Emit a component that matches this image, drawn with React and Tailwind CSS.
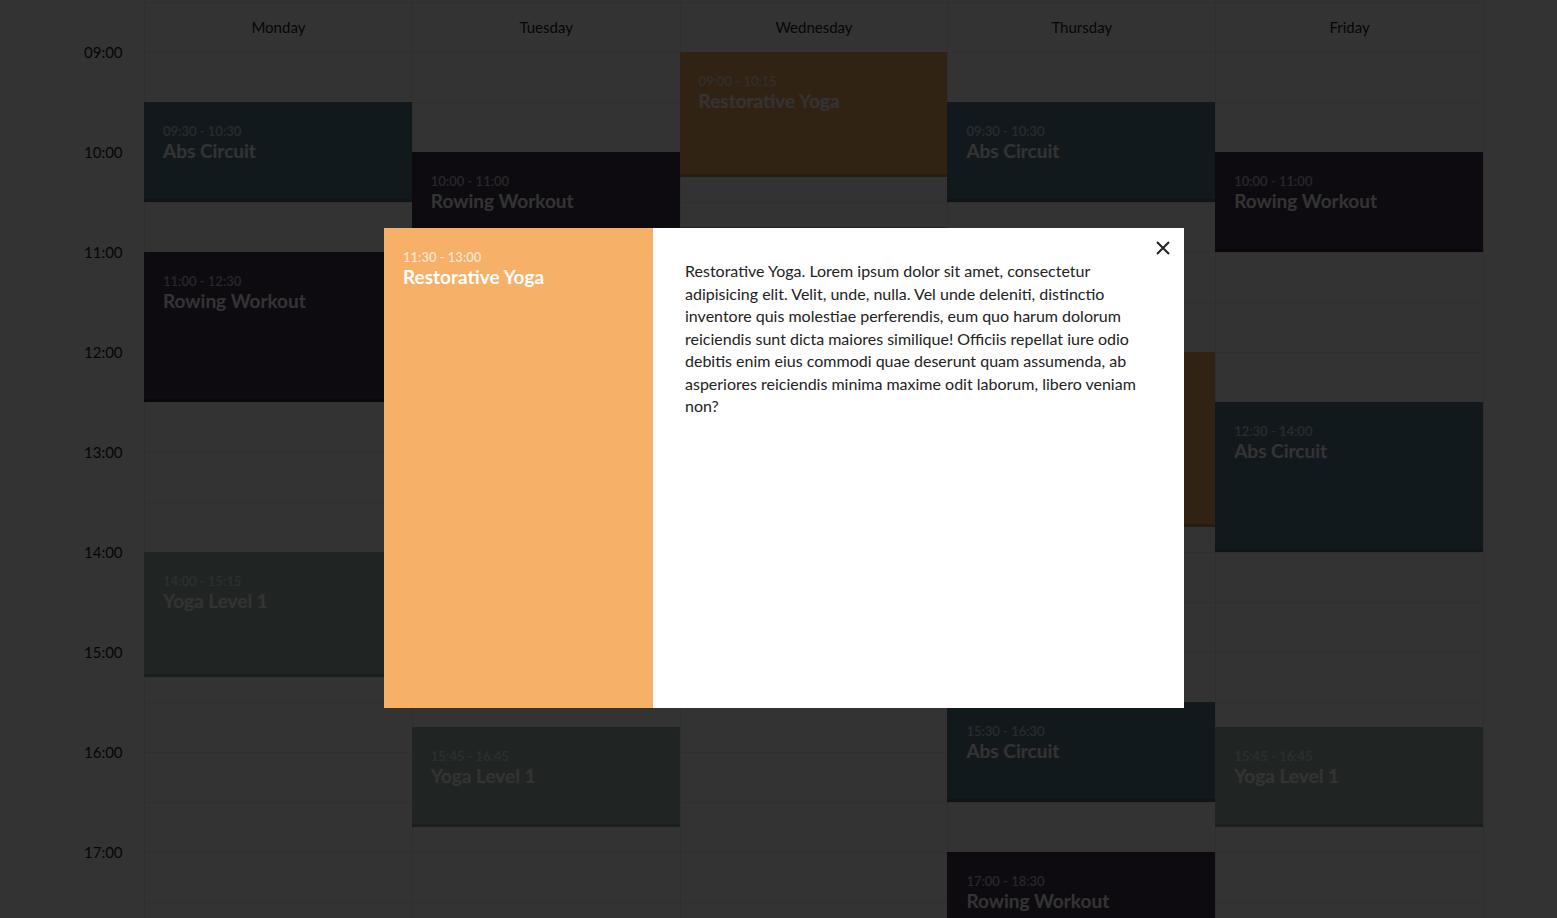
import React from 'react';

const COLORS = {
    abs: 'bg-[#577f92]',
    rowing: 'bg-[#443453]',
    yoga: 'bg-[#f6b067]',
    level: 'bg-[#a2b9b2]',
};

const days = [
    {
        name: 'Monday',
        events: [
            { start: '09:30', end: '10:30', name: 'Abs Circuit', type: 'abs' },
            { start: '11:00', end: '12:30', name: 'Rowing Workout', type: 'rowing' },
            { start: '14:00', end: '15:15', name: 'Yoga Level 1', type: 'level' },
        ],
    },
    {
        name: 'Tuesday',
        events: [
            { start: '10:00', end: '11:00', name: 'Rowing Workout', type: 'rowing' },
            { start: '11:30', end: '13:00', name: 'Restorative Yoga', type: 'yoga' },
            { start: '13:30', end: '15:00', name: 'Abs Circuit', type: 'abs' },
            { start: '15:45', end: '16:45', name: 'Yoga Level 1', type: 'level' },
        ],
    },
    {
        name: 'Wednesday',
        events: [
            { start: '09:00', end: '10:15', name: 'Restorative Yoga', type: 'yoga' },
            { start: '10:45', end: '11:45', name: 'Yoga Level 1', type: 'level' },
            { start: '12:00', end: '13:45', name: 'Rowing Workout', type: 'rowing' },
            { start: '13:45', end: '15:00', name: 'Abs Circuit', type: 'abs' },
        ],
    },
    {
        name: 'Thursday',
        events: [
            { start: '09:30', end: '10:30', name: 'Abs Circuit', type: 'abs' },
            { start: '12:00', end: '13:45', name: 'Restorative Yoga', type: 'yoga' },
            { start: '15:30', end: '16:30', name: 'Abs Circuit', type: 'abs' },
            { start: '17:00', end: '18:30', name: 'Rowing Workout', type: 'rowing' },
        ],
    },
    {
        name: 'Friday',
        events: [
            { start: '10:00', end: '11:00', name: 'Rowing Workout', type: 'rowing' },
            { start: '12:30', end: '14:00', name: 'Abs Circuit', type: 'abs' },
            { start: '15:45', end: '16:45', name: 'Yoga Level 1', type: 'level' },
        ],
    },
];

const slots = [];
for (let h = 9; h < 19; h++) {
    const hh = String(h).padStart(2, '0');
    slots.push(`${hh}:00`, `${hh}:30`);
}

const toMinutes = time => {
    const [h, m] = time.split(':').map(Number);
    return h * 60 + m - 9 * 60;
};

const EventInfo = ({ start, end, name }) => (
    <>
        <div className="text-[13px] font-semibold leading-4 text-white/70">
            {start} - {end}
        </div>
        <div className="text-[19px] font-bold leading-6 text-white">{name}</div>
    </>
);

const Event = ({ event }) => {
    const top = (toMinutes(event.start) * 100) / 60 - 1;
    const height = ((toMinutes(event.end) - toMinutes(event.start)) * 100) / 60;
    return (
        <div
            className={`absolute left-[-1px] right-0 z-10 px-[19px] pt-[21px] shadow-[inset_0_-3px_0_rgba(0,0,0,0.2)] ${COLORS[event.type]}`}
            style={{ top, height }}
        >
            <EventInfo {...event} />
        </div>
    );
};

const CloseIcon = () => (
    <svg width="14" height="14" viewBox="0 0 14 14" fill="none">
        <path d="M1 1L13 13M13 1L1 13" stroke="#222" strokeWidth="2" />
    </svg>
);

export default function App() {
    return (
        <div className="min-h-screen bg-white font-['Lato','Liberation_Sans',sans-serif] text-[#222]">
            <div className="flex pt-[2px]">
                <div className="w-[144px] shrink-0 pl-[84px] pt-[50px]">
                    {slots.map(slot => (
                        <div key={slot} className="h-[50px]">
                            {slot.endsWith(':00') && (
                                <span className="block -translate-y-1/2 text-[15px] leading-5">{slot}</span>
                            )}
                        </div>
                    ))}
                </div>

                <div className="grid w-[1340px] grid-cols-5 border-r border-t border-[#eaeaea]">
                    {days.map(day => (
                        <div key={day.name} className="border-l border-[#eaeaea]">
                            <div className="flex h-[50px] items-center justify-center border-b border-[#eaeaea] text-[15px]">
                                {day.name}
                            </div>
                            <div className="relative">
                                {slots.map(slot => (
                                    <div key={slot} className="h-[50px] border-b border-[#eaeaea]" />
                                ))}
                                {day.events.map(event => (
                                    <Event key={event.start} event={event} />
                                ))}
                            </div>
                        </div>
                    ))}
                </div>
            </div>

            <div className="fixed inset-0 z-20 bg-black/80" />

            <div className="fixed left-[384px] top-[228px] z-30 flex h-[480px] w-[800px] bg-white">
                <div className="w-[269px] shrink-0 bg-[#f6b067] px-[19px] pt-[21px]">
                    <EventInfo start="11:30" end="13:00" name="Restorative Yoga" />
                </div>
                <div className="relative flex-1 px-[32px] pt-[32px]">
                    <button className="absolute right-[13px] top-[12px] p-[1px]">
                        <CloseIcon />
                    </button>
                    <p className="text-[16px] leading-[22.5px] text-[#222]">
                        Restorative Yoga. Lorem ipsum dolor sit amet, consectetur adipisicing elit. Velit, unde, nulla.
                        Vel unde deleniti, distinctio inventore quis molestiae perferendis, eum quo harum dolorum
                        reiciendis sunt dicta maiores similique! Officiis repellat iure odio debitis enim eius commodi
                        quae deserunt quam assumenda, ab asperiores reiciendis minima maxime odit laborum, libero veniam
                        non?
                    </p>
                </div>
            </div>
        </div>
    );
}
